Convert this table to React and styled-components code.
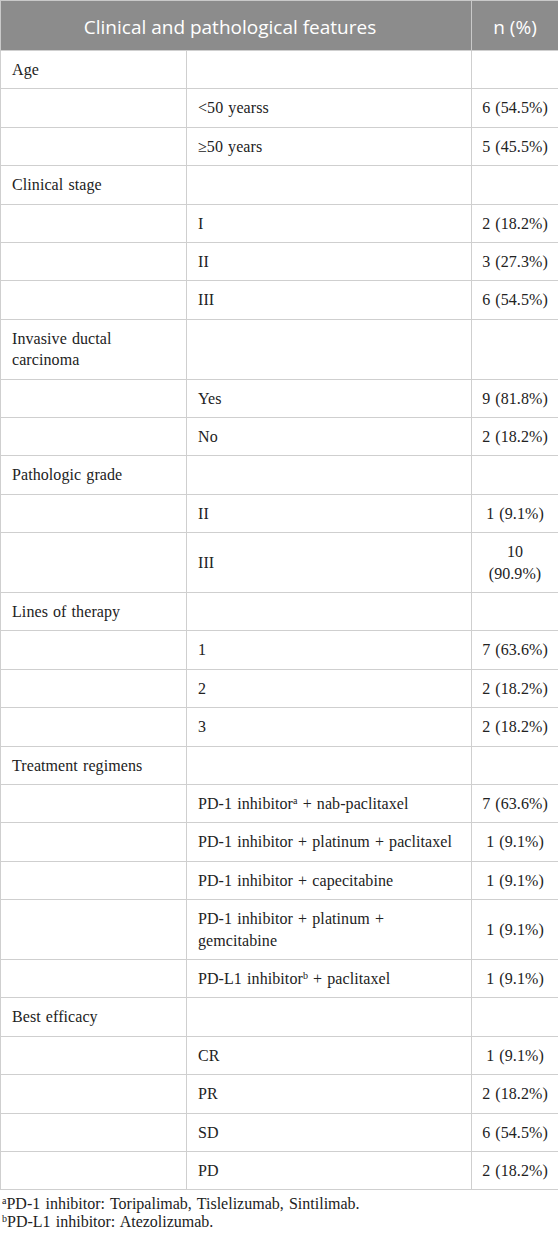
import React from "react";
import styled, { createGlobalStyle } from "styled-components";

const GlobalStyle = createGlobalStyle`
  html, body {
    margin: 0;
    padding: 0;
    background: #ffffff;
  }
`;

const Page = styled.div`
  width: 558px;
  font-family: "Liberation Serif", "Times New Roman", serif;
  color: #222222;
`;

const Table = styled.table`
  width: 558px;
  border-collapse: collapse;
  table-layout: fixed;
`;

const HeadCell = styled.th`
  height: 47px;
  padding: ${(p) => (p.$wide ? "2px 18px 0 6px" : "2px 8px 0")};
  background: #8c8c8c;
  color: #ffffff;
  font-family: "Open Sans", "Liberation Sans", sans-serif;
  font-weight: 400;
  font-size: 19px;
  text-align: center;
  border: 1px solid #c9c9c9;
  border-bottom: none;
`;

const Cell = styled.td`
  padding: 8px ${(p) => (p.$count ? "7px" : "11px")} 7.9px;
  font-size: 16px;
  line-height: 21.5px;
  word-spacing: 1px;
  letter-spacing: 0.08px;
  text-align: ${(p) => (p.$count ? "center" : "left")};
  vertical-align: middle;
  border: 1px solid #cfcfcf;
`;

const Sup = styled.sup`
  font-size: 10px;
  line-height: 0;
  vertical-align: 5px;
`;

const Notes = styled.div`
  padding: 5px 0 0 2px;
  font-size: 16px;
  line-height: 17.5px;
  word-spacing: 1.2px;
`;

const rows = [
  { label: "Age" },
  { value: "<50 yearss", count: "6 (54.5%)" },
  { value: "\u226550 years", count: "5 (45.5%)" },
  { label: "Clinical stage" },
  { value: "I", count: "2 (18.2%)" },
  { value: "II", count: "3 (27.3%)" },
  { value: "III", count: "6 (54.5%)" },
  { label: "Invasive ductal carcinoma" },
  { value: "Yes", count: "9 (81.8%)" },
  { value: "No", count: "2 (18.2%)" },
  { label: "Pathologic grade" },
  { value: "II", count: "1 (9.1%)" },
  { value: "III", count: "10 (90.9%)" },
  { label: "Lines of therapy" },
  { value: "1", count: "7 (63.6%)" },
  { value: "2", count: "2 (18.2%)" },
  { value: "3", count: "2 (18.2%)" },
  { label: "Treatment regimens" },
  { value: <>PD-1 inhibitor<Sup>a</Sup> + nab-paclitaxel</>, count: "7 (63.6%)" },
  { value: "PD-1 inhibitor + platinum + paclitaxel", count: "1 (9.1%)" },
  { value: "PD-1 inhibitor + capecitabine", count: "1 (9.1%)" },
  { value: "PD-1 inhibitor + platinum + gemcitabine", count: "1 (9.1%)" },
  { value: <>PD-L1 inhibitor<Sup>b</Sup> + paclitaxel</>, count: "1 (9.1%)" },
  { label: "Best efficacy" },
  { value: "CR", count: "1 (9.1%)" },
  { value: "PR", count: "2 (18.2%)" },
  { value: "SD", count: "6 (54.5%)" },
  { value: "PD", count: "2 (18.2%)" },
];

export default function App() {
  return (
    <Page>
      <GlobalStyle />
      <Table>
        <colgroup>
          <col style={{ width: 186 }} />
          <col style={{ width: 285 }} />
          <col style={{ width: 87 }} />
        </colgroup>
        <thead>
          <tr>
            <HeadCell colSpan={2} $wide>Clinical and pathological features</HeadCell>
            <HeadCell>n (%)</HeadCell>
          </tr>
        </thead>
        <tbody>
          {rows.map((row, i) => (
            <tr key={i}>
              <Cell>{row.label || ""}</Cell>
              <Cell>{row.value || ""}</Cell>
              <Cell $count>{row.count || ""}</Cell>
            </tr>
          ))}
        </tbody>
      </Table>
      <Notes>
        <div><Sup>a</Sup>PD-1 inhibitor: Toripalimab, Tislelizumab, Sintilimab.</div>
        <div><Sup>b</Sup>PD-L1 inhibitor: Atezolizumab.</div>
      </Notes>
    </Page>
  );
}
